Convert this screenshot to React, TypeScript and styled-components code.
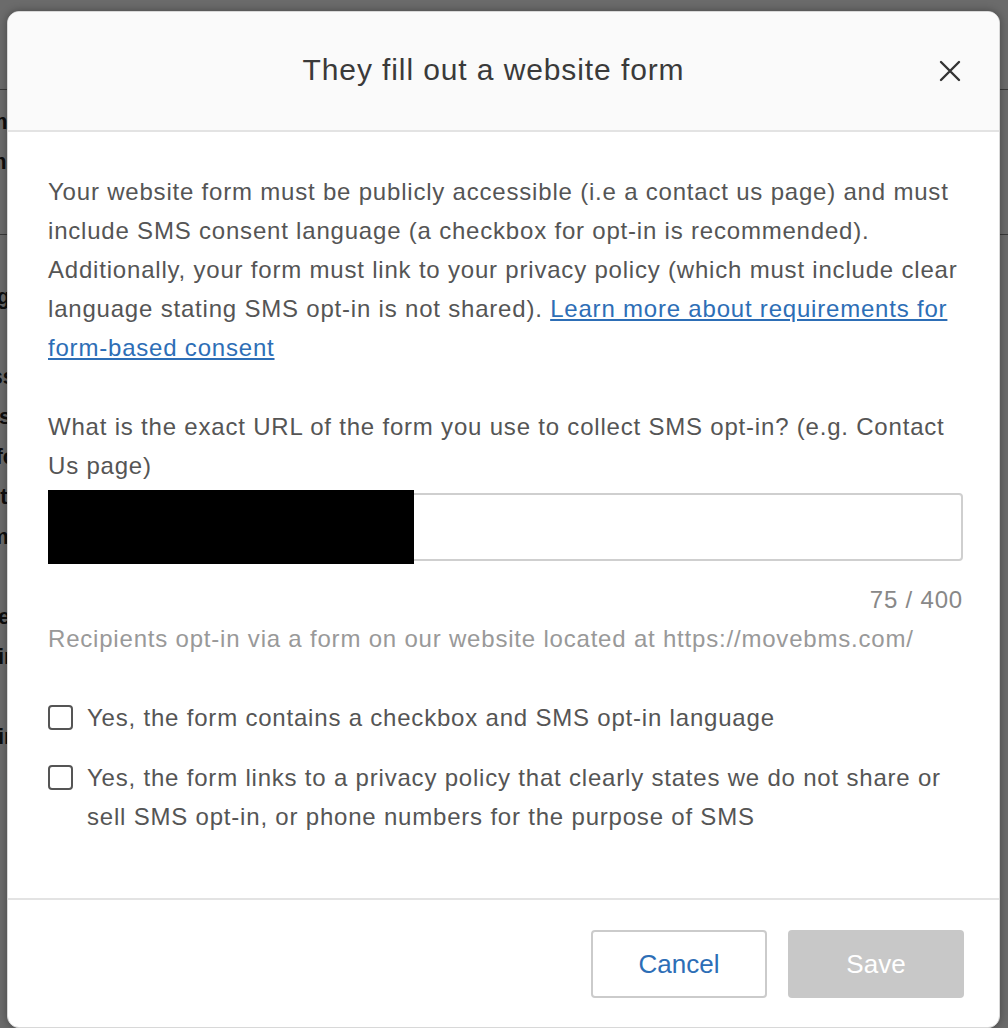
import React from 'react';
import styled, { createGlobalStyle } from 'styled-components';

const GlobalStyle = createGlobalStyle`
  html, body {
    margin: 0;
    padding: 0;
    background: #ffffff;
    font-family: "Liberation Sans", Arial, Helvetica, sans-serif;
  }
`;

const Page = styled.div`
  position: relative;
  width: 1008px;
  height: 1028px;
  overflow: hidden;
  background: #ffffff;
`;

const BackPage = styled.div`
  display: flex;
  flex-direction: column;
  padding-top: 89px;
  margin-left: -40px;
  font-size: 22px;
  font-weight: 700;
  color: #222;
  line-height: 40px;
`;

const BackRule = styled.div<{ $top?: boolean }>`
  height: 1px;
  background: #888;
  margin: ${p => (p.$top ? '0 0 12px' : '52px 0 42px')};
`;

const Overlay = styled.div`
  position: absolute;
  inset: 0;
  background: rgba(0, 0, 0, 0.58);
  padding: 11px 8px 0 7px;
`;

const Modal = styled.div`
  width: 993px;
  height: 1017px;
  background: #ffffff;
  border-radius: 12px;
  box-shadow: 0 0 8px rgba(0, 0, 0, 0.35);
  border: 1px solid #d8d8d8;
  box-sizing: border-box;
  display: flex;
  flex-direction: column;
  overflow: hidden;
`;

const Header = styled.div`
  height: 118px;
  flex-shrink: 0;
  background: #fafafa;
  border-bottom: 2px solid #e3e3e3;
  display: flex;
  align-items: center;
  justify-content: center;
  padding-right: 20px;
  position: relative;
`;

const Title = styled.h2`
  margin: 0 0 2px;
  font-size: 30px;
  font-weight: 400;
  color: #3a3a3a;
  letter-spacing: 0.9px;
`;

const Close = styled.button`
  position: absolute;
  right: 37px;
  top: 47px;
  width: 24px;
  height: 24px;
  padding: 0;
  border: 0;
  background: none;
  cursor: pointer;
`;

const Body = styled.div`
  padding: 40px 36px 0 40px;
  color: #555;
  font-size: 24px;
  letter-spacing: 0.8px;
  line-height: 39px;
  flex: 1;
`;

const Para = styled.p`
  margin: 0 0 40px;
`;

const Link = styled.a`
  color: #2d6eb6;
  text-decoration: underline;
`;

const Label = styled.div`
  margin-bottom: 8px;
`;

const InputWrap = styled.div`
  position: relative;
  width: 915px;
`;

const Input = styled.div`
  height: 68px;
  box-sizing: border-box;
  border: 2px solid #cfcfcf;
  border-radius: 4px;
  background: #fff;
`;

const Redact = styled.div`
  position: absolute;
  left: 0;
  top: -3px;
  width: 366px;
  height: 74px;
  background: #000;
`;

const Counter = styled.div`
  width: 915px;
  text-align: right;
  color: #888;
  margin-top: 19px;
`;

const Hint = styled.div`
  color: #999;
  margin-bottom: 40px;
`;

const CheckRow = styled.label`
  display: flex;
  align-items: flex-start;
  gap: 14px;
  margin-bottom: 21px;
`;

const Box = styled.span`
  flex-shrink: 0;
  width: 25px;
  height: 25px;
  box-sizing: border-box;
  margin: 7px 0 0 0;
  border: 2px solid #555;
  border-radius: 4px;
  background: #fff;
`;

const Footer = styled.div`
  height: 129px;
  flex-shrink: 0;
  border-top: 2px solid #e3e3e3;
  display: flex;
  justify-content: flex-end;
  align-items: flex-start;
  gap: 21px;
  padding: 30px 35px 0 0;
  box-sizing: border-box;
`;

const Button = styled.button<{ primary?: boolean }>`
  width: 176px;
  height: 68px;
  border-radius: 4px;
  font-family: inherit;
  font-size: 26px;
  cursor: pointer;
  border: ${p => (p.primary ? '0' : '2px solid #cbcbcb')};
  background: ${p => (p.primary ? '#c8c8c8' : '#ffffff')};
  color: ${p => (p.primary ? '#ffffff' : '#2d6eb6')};
`;

const App: React.FC = () => {
  return (
    <Page>
      <GlobalStyle />
      <BackPage>
        <BackRule $top />
        <div>Campaign</div>
        <div>Symbol</div>
        <BackRule />
        <div>Programming</div>
        <div>R</div>
        <div>Message</div>
        <div>Lists</div>
        <div>Perform</div>
        <div>Sent,</div>
        <div>Admin</div>
        <div>All</div>
        <div>Other</div>
        <div>Optin</div>
        <div>For</div>
        <div>Optin</div>
        <div>Use</div>
      </BackPage>
      <Overlay>
        <Modal>
          <Header>
            <Title>They fill out a website form</Title>
            <Close aria-label="Close">
              <svg width="24" height="24" viewBox="0 0 24 24">
                <path d="M3 3 L21 21 M21 3 L3 21" stroke="#333" strokeWidth="2.4" strokeLinecap="round" fill="none" />
              </svg>
            </Close>
          </Header>
          <Body>
            <Para>
              Your website form must be publicly accessible (i.e a contact us page) and must include SMS consent
              language (a checkbox for opt-in is recommended). Additionally, your form must link to your privacy
              policy (which must include clear language stating SMS opt-in is not shared).{' '}
              <Link href="#">Learn more about requirements for form-based consent</Link>
            </Para>
            <Label>What is the exact URL of the form you use to collect SMS opt-in? (e.g. Contact Us page)</Label>
            <InputWrap>
              <Input />
              <Redact />
            </InputWrap>
            <Counter>75 / 400</Counter>
            <Hint>Recipients opt-in via a form on our website located at https://movebms.com/</Hint>
            <CheckRow>
              <Box />
              <span>Yes, the form contains a checkbox and SMS opt-in language</span>
            </CheckRow>
            <CheckRow>
              <Box />
              <span>
                Yes, the form links to a privacy policy that clearly states we do not share or sell SMS opt-in, or
                phone numbers for the purpose of SMS
              </span>
            </CheckRow>
          </Body>
          <Footer>
            <Button>Cancel</Button>
            <Button primary>Save</Button>
          </Footer>
        </Modal>
      </Overlay>
    </Page>
  );
};

export default App;
